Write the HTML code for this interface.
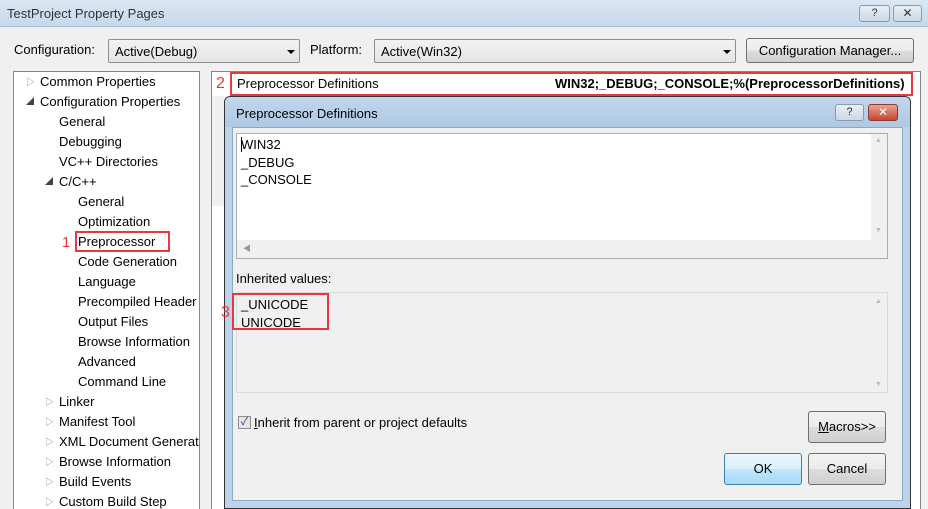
<!DOCTYPE html>
<html><head><style>
*{margin:0;padding:0;box-sizing:border-box}
html,body{width:928px;height:509px;overflow:hidden}
body{background:#f0f0f0;font-family:"Liberation Sans","Noto Sans CJK SC",sans-serif;font-size:13px;color:#000;position:relative}
.a{position:absolute;white-space:nowrap}
.btn{position:absolute;border:1px solid #707070;border-radius:3px;background:linear-gradient(#f2f2f2,#ebebeb 50%,#dddddd 50%,#cfcfcf);text-align:center}
.combo{position:absolute;border:1px solid #8e8f8f;border-radius:2px;background:linear-gradient(#f2f2f2,#e4e4e4);height:24px;padding:4px 6px}
.tri{position:absolute;width:0;height:0;border-left:4px solid transparent;border-right:4px solid transparent;border-top:4px solid #000}
.red{position:absolute;border:2px solid #e8383d}
.tree div{height:20px;line-height:20px;overflow:hidden}
.g{display:inline-block;width:14px;font-size:9px;line-height:20px;vertical-align:top;color:#888}
.g2{display:inline-block;width:14px;font-size:8px;line-height:20px;vertical-align:top;color:#444}
</style></head><body>
<div class="a" style="left:0;top:0;width:928px;height:27px;background:linear-gradient(#dbe7f3,#c6d8ea);border-bottom:1px solid #a9bed4"></div>
<div class="a" style="left:7px;top:6px;font-size:13px;color:#333">TestProject Property Pages</div>
<div class="btn" style="left:859px;top:5px;width:31px;height:17px;border-color:#8a9bb0;background:linear-gradient(#e8eef5,#cbd8e6);font-size:11px;color:#333;line-height:15px">?</div>
<div class="btn" style="left:893px;top:5px;width:29px;height:17px;border-color:#8a9bb0;background:linear-gradient(#e8eef5,#cbd8e6);font-size:12px;color:#333;line-height:15px">✕</div>
<div class="a" style="left:14px;top:42px">Configuration:</div>
<div class="combo" style="left:108px;top:39px;width:192px">Active(Debug)</div><div class="tri" style="left:287px;top:50px"></div>
<div class="a" style="left:310px;top:42px">Platform:</div>
<div class="combo" style="left:374px;top:39px;width:362px">Active(Win32)</div><div class="tri" style="left:723px;top:50px"></div>
<div class="btn" style="left:746px;top:38px;width:168px;height:25px;line-height:23px">Configuration Manager...</div>
<div class="a" style="left:13px;top:71px;width:187px;height:440px;background:#fff;border:1px solid #828790"></div>
<div class="a tree" style="left:26px;top:72px;width:173px;overflow:hidden">
<div><span class="g">▷</span>Common Properties</div>
<div><span class="g2">◢</span>Configuration Properties</div>
<div style="padding-left:33px">General</div>
<div style="padding-left:33px">Debugging</div>
<div style="padding-left:33px">VC++ Directories</div>
<div style="padding-left:19px"><span class="g2">◢</span>C/C++</div>
<div style="padding-left:52px">General</div>
<div style="padding-left:52px">Optimization</div>
<div style="padding-left:52px">Preprocessor</div>
<div style="padding-left:52px">Code Generation</div>
<div style="padding-left:52px">Language</div>
<div style="padding-left:52px">Precompiled Header</div>
<div style="padding-left:52px">Output Files</div>
<div style="padding-left:52px">Browse Information</div>
<div style="padding-left:52px">Advanced</div>
<div style="padding-left:52px">Command Line</div>
<div style="padding-left:19px"><span class="g">▷</span>Linker</div>
<div style="padding-left:19px"><span class="g">▷</span>Manifest Tool</div>
<div style="padding-left:19px"><span class="g">▷</span>XML Document Generator</div>
<div style="padding-left:19px"><span class="g">▷</span>Browse Information</div>
<div style="padding-left:19px"><span class="g">▷</span>Build Events</div>
<div style="padding-left:19px"><span class="g">▷</span>Custom Build Step</div>
</div>
<div class="red" style="left:75px;top:231px;width:95px;height:21px"></div>
<div class="a" style="left:62px;top:234px;color:#e8383d;font-size:15px">1</div>
<div class="a" style="left:211px;top:71px;width:710px;height:440px;background:#fff;border:1px solid #828790"></div>
<div class="a" style="left:212px;top:96px;width:12px;height:110px;background:#f0f0f0"></div>
<div class="red" style="left:230px;top:72px;width:683px;height:24px"></div>
<div class="a" style="left:216px;top:75px;color:#e8383d;font-size:16px">2</div>
<div class="a" style="left:237px;top:76px">Preprocessor Definitions</div>
<div class="a" style="left:555px;top:76px;font-weight:bold">WIN32;_DEBUG;_CONSOLE;%(PreprocessorDefinitions)</div>
<div class="a" style="left:224px;top:96px;width:687px;height:413px;background:#bcd3ea;border:1px solid #333;border-radius:6px 6px 0 0"></div>
<div class="a" style="left:225px;top:97px;width:685px;height:30px;background:linear-gradient(#c2d6ec,#aec8e3);border-radius:5px 5px 0 0"></div>
<div class="a" style="left:236px;top:106px">Preprocessor Definitions</div>
<div class="btn" style="left:835px;top:104px;width:29px;height:17px;border-color:#8a9bb0;background:linear-gradient(#e8eef5,#cbd8e6);font-size:11px;line-height:15px;color:#333">?</div>
<div class="btn" style="left:868px;top:104px;width:30px;height:17px;border-color:#8c3b2f;background:linear-gradient(#e9a394,#c6462f);font-size:12px;line-height:15px;color:#fff">✕</div>
<div class="a" style="left:232px;top:127px;width:671px;height:374px;background:#f0f0f0;border:1px solid #8da9c7"></div>
<div class="a" style="left:236px;top:133px;width:652px;height:126px;background:#fff;border:1px solid #abadb3"></div>
<div class="a" style="left:237px;top:240px;width:634px;height:18px;background:#f0f0f0"></div>
<div class="a" style="left:871px;top:134px;width:16px;height:124px;background:#f0f0f0"></div>
<div class="a" style="left:243px;top:243px;font-size:8px;color:#999">◀</div>
<div class="a" style="left:875px;top:137px;font-size:7px;color:#bbb">▲</div>
<div class="a" style="left:875px;top:227px;font-size:7px;color:#bbb">▼</div>
<div class="a" style="left:241px;top:136px;line-height:17.5px">WIN32<br>_DEBUG<br>_CONSOLE</div>
<div class="a" style="left:241px;top:137px;width:1px;height:15px;background:#000"></div>
<div class="a" style="left:236px;top:271px">Inherited values:</div>
<div class="a" style="left:236px;top:292px;width:652px;height:101px;background:#f0f0f0;border:1px solid #d9d9d9"></div>
<div class="a" style="left:875px;top:298px;font-size:7px;color:#bbb">▲</div>
<div class="a" style="left:875px;top:381px;font-size:7px;color:#bbb">▼</div>
<div class="a" style="left:241px;top:296px;line-height:17.5px">_UNICODE<br>UNICODE</div>
<div class="red" style="left:232px;top:293px;width:97px;height:37px"></div>
<div class="a" style="left:221px;top:304px;color:#e8383d;font-size:16px">3</div>
<div class="a" style="left:238px;top:416px;width:13px;height:13px;border:1px solid #8f8f8f;background:#e6e6e6;font-size:11px;line-height:11px;text-align:center;color:#2a4a9a">✓</div>
<div class="a" style="left:254px;top:415px"><u>I</u>nherit from parent or project defaults</div>
<div class="btn" style="left:808px;top:411px;width:78px;height:32px;line-height:30px"><u>M</u>acros&gt;&gt;</div>
<div class="btn" style="left:724px;top:453px;width:78px;height:32px;line-height:30px;border-color:#3c7fb1;background:linear-gradient(#eaf6fd,#d9f0fc 50%,#bee6fd 50%,#a7d9f5)">OK</div>
<div class="btn" style="left:808px;top:453px;width:78px;height:32px;line-height:30px">Cancel</div>
</body></html>
